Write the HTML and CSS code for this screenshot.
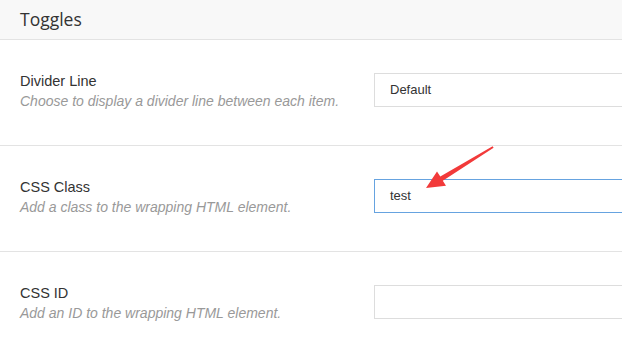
FILE: index.html
```html
<!DOCTYPE html>
<html lang="en">
<head>
    <meta charset="UTF-8">
    <title>Toggles</title>
    <link rel="stylesheet" href="styles.css">
</head>
<body>

    <div class="panel">
        <div class="panel-header">Toggles</div>

        <div class="option">
            <div class="option-label">
                <div class="option-title">Divider Line</div>
                <div class="option-desc">Choose to display a divider line between each item.</div>
            </div>
            <div class="field">Default</div>
        </div>

        <div class="option">
            <div class="option-label">
                <div class="option-title">CSS Class</div>
                <div class="option-desc">Add a class to the wrapping HTML element.</div>
            </div>
            <div class="field field-focus">test</div>
        </div>

        <div class="option">
            <div class="option-label">
                <div class="option-title">CSS ID</div>
                <div class="option-desc">Add an ID to the wrapping HTML element.</div>
            </div>
            <div class="field"></div>
        </div>

        <!-- annotation arrow -->
        <svg class="arrow" width="622" height="353" viewBox="0 0 622 353">
            <polygon fill="#f23a3a" points="426,188 437,171.5 440.3,176.4 492.6,146.2 493.6,147.8 442.8,180.8 446,185.8"/>
        </svg>
    </div>

</body>
</html>
```

FILE: styles.css
```css
/* page */
body {
    margin: 0;
    background: #fff;
    font-family: "Liberation Sans", Arial, sans-serif;
}

.panel {
    position: relative;
    overflow: hidden;
}

/* header */
.panel-header {
    height: 39px;
    line-height: 38px;
    padding-left: 20px;
    background: #f8f8f8;
    border-bottom: 1px solid #e3e3e3;
    font-family: "Open Sans", sans-serif;
    font-size: 17.5px;
    color: #333;
}

/* option rows */
.option {
    display: grid;
    grid-template-columns: 354px 1fr;
    align-items: center;
    height: 105px;
    padding-left: 20px;
    border-bottom: 1px solid #e3e3e3;
}

.option-label {
    margin-top: -3px;
}

.option-title {
    font-size: 14.5px;
    line-height: 20px;
    color: #333;
}

.option-desc {
    font-size: 14px;
    line-height: 21px;
    font-style: italic;
    color: #999;
}

/* fields: right edge runs off the page */
.field {
    height: 32px;
    line-height: 32px;
    padding-left: 15px;
    margin-top: -5px;
    border: 1px solid #ddd;
    border-right: none;
    font-size: 13px;
    color: #333;
}

.field-focus {
    border-color: #66a3e0;
}

.arrow {
    position: absolute;
    left: 0;
    top: 0;
}
```
